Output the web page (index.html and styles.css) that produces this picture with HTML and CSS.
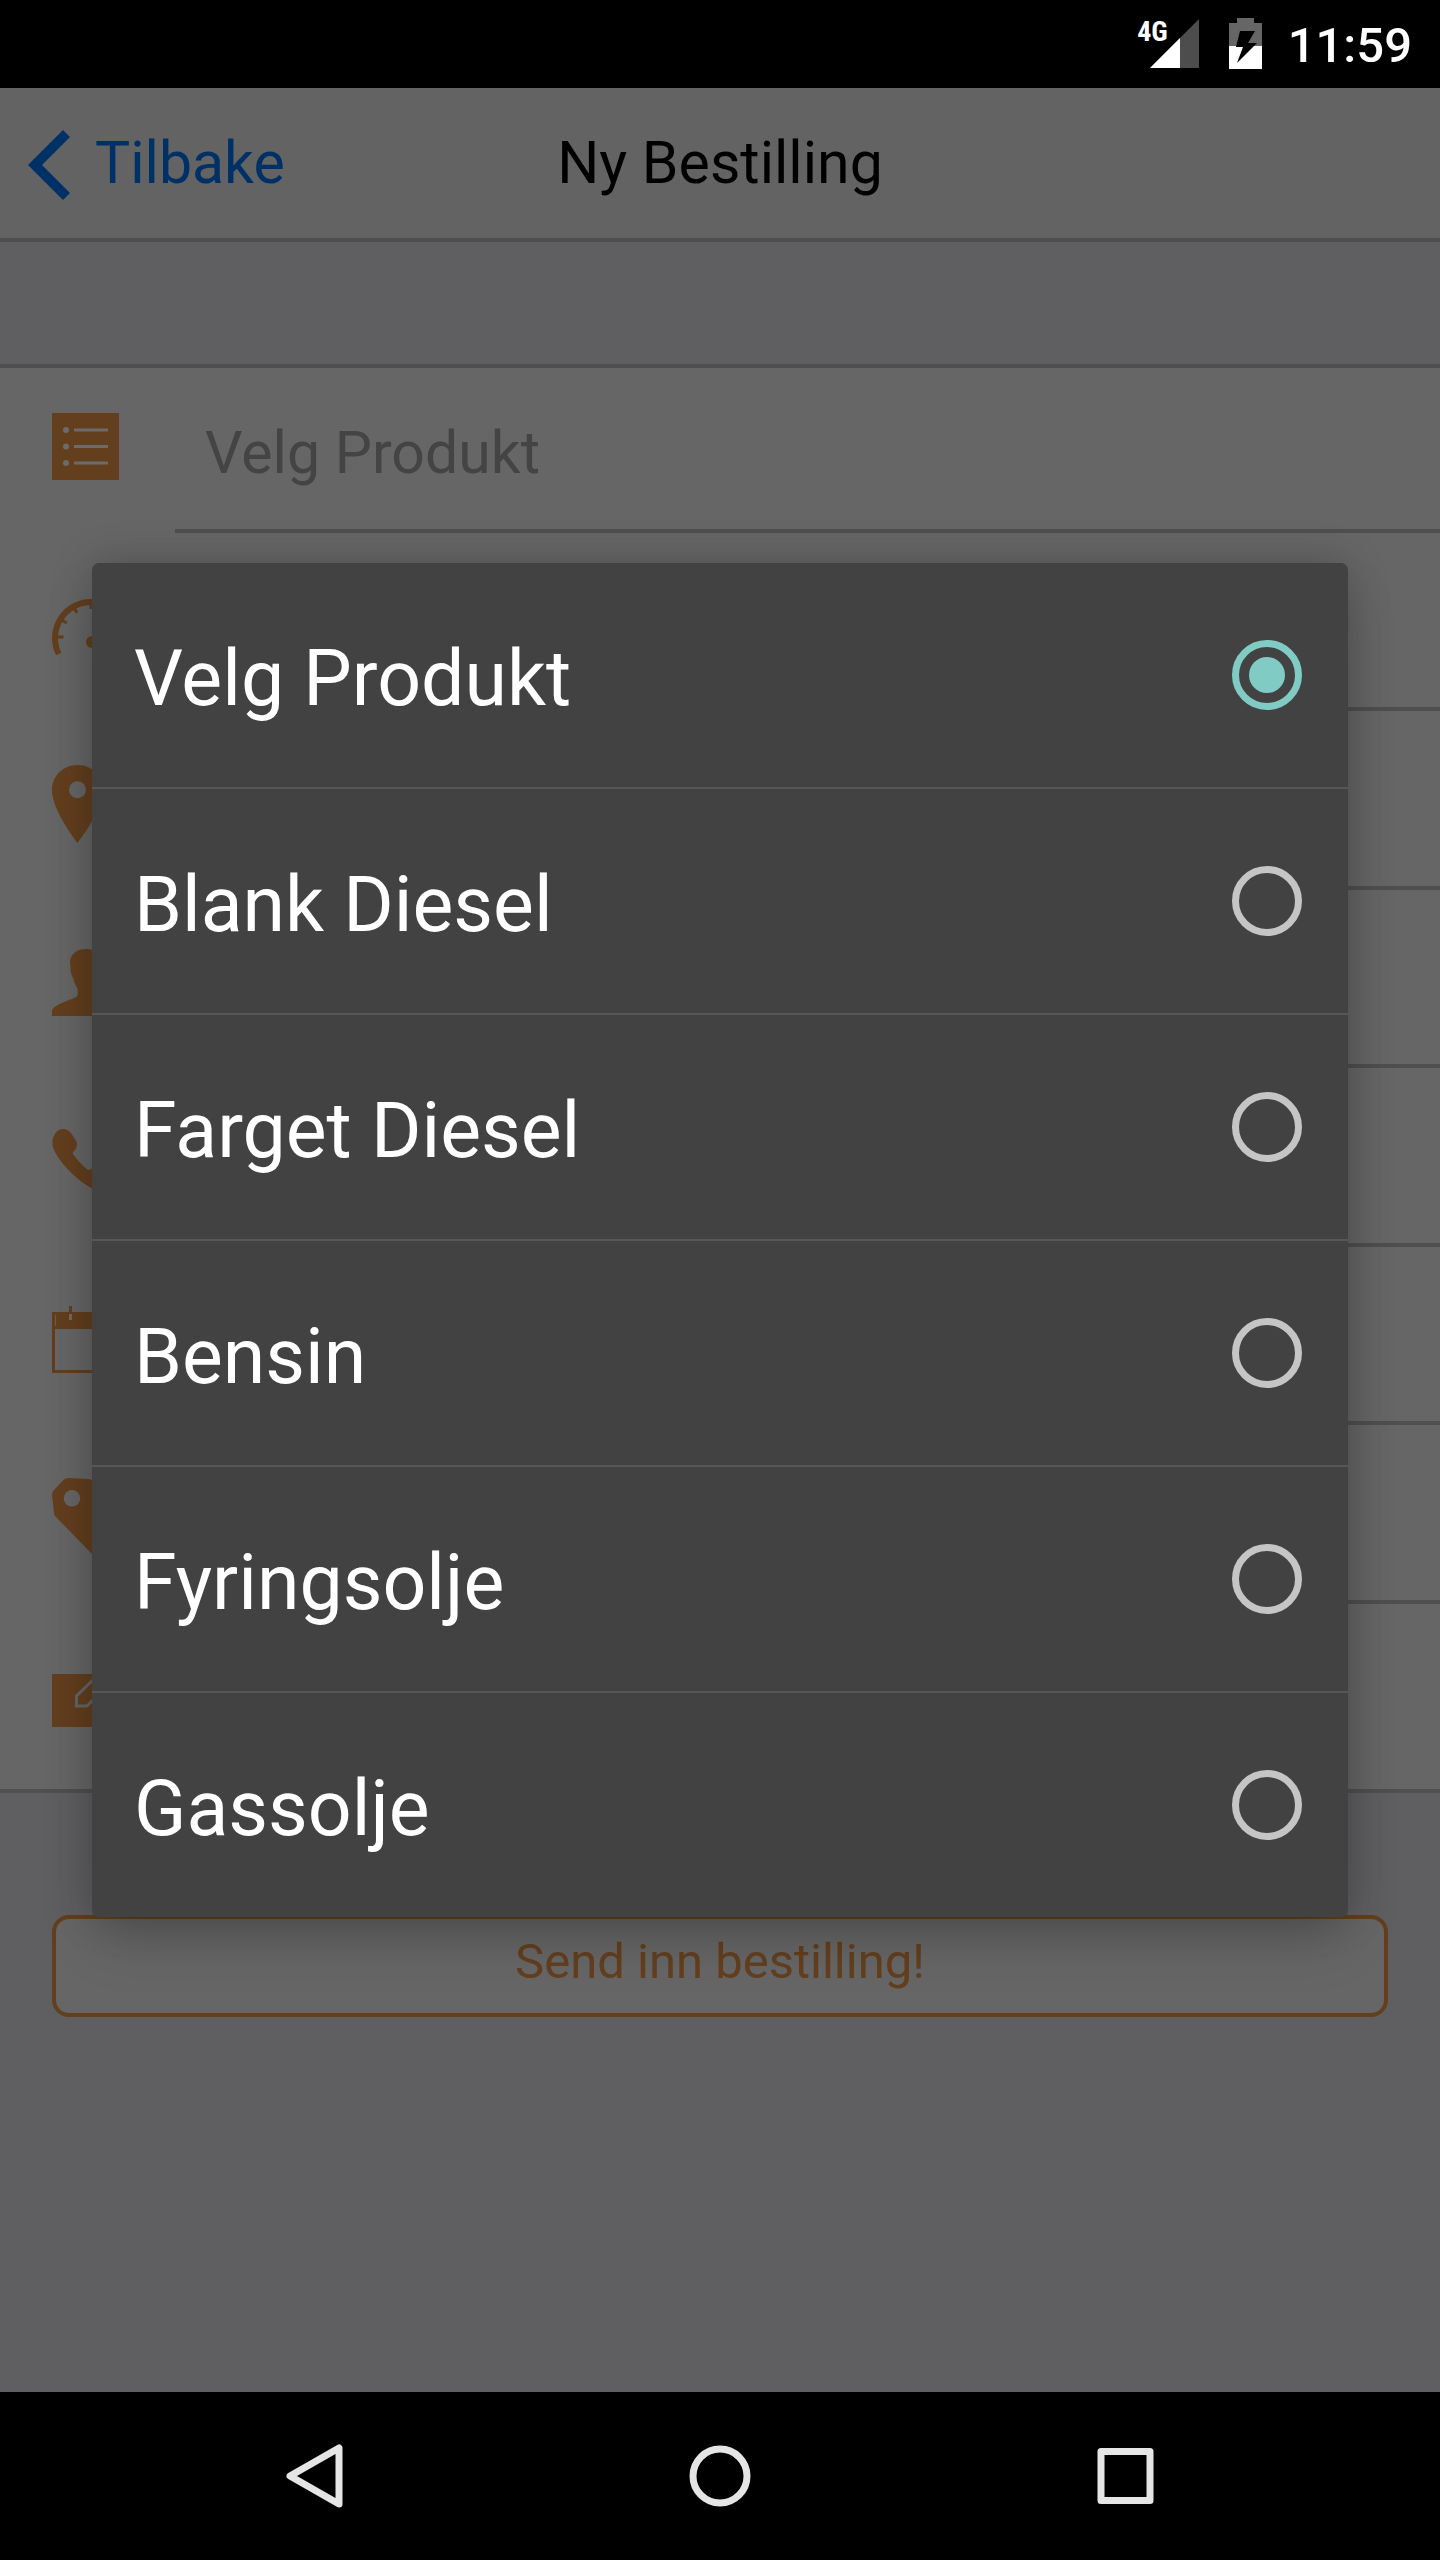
FILE: index.html
```html
<!DOCTYPE html>
<html lang="no">
<head>
<meta charset="utf-8">
<meta name="viewport" content="width=device-width, initial-scale=1">
<title>Ny Bestilling</title>
<link rel="stylesheet" href="styles.css">
</head>
<body>
<div class="status-bar">
  <div class="network">
    <span class="network-type">4G</span>
    <svg class="signal" viewBox="0 0 49 49" aria-hidden="true"><path d="M49 0V49H0Z" fill="#4d4d4d"/><path d="M30 19V49H0Z" fill="#fff"/></svg>
  </div>
  <svg class="battery" viewBox="0 0 33 51" aria-hidden="true"><path d="M8 0H25V5H33V28H0V5H8Z" fill="#666"/><path d="M0 28H33V51H0Z" fill="#fff"/><path d="M11 13H26L19 25H28L8 45L14 29H7Z" fill="#000"/></svg>
  <time class="clock">11:59</time>
</div>

<div class="app">
  <header class="navbar">
    <a class="back" href="#"><svg class="chevron" viewBox="0 0 42 70" aria-hidden="true"><path d="M0 35L35 0L42 7L14 35L42 63L35 70Z"/></svg>Tilbake</a>
    <h1 class="title">Ny Bestilling</h1>
  </header>

  <form class="order">
    <div class="fields">
      <div class="row row-first">
        <svg class="icon" viewBox="0 0 80 80" aria-hidden="true"><path d="M0 6H67V73H0Z"/><g class="cut"><circle cx="14" cy="23" r="3"/><circle cx="14" cy="39.500" r="3"/><circle cx="14" cy="56" r="3"/><path d="M22 21.500H56V24.500H22ZM22 38H56V41H22ZM22 54.500H56V57.500H22Z"/></g></svg>
        <div class="field"><select class="control" aria-label="Produkt"><option>Velg Produkt</option><option>Blank Diesel</option><option>Farget Diesel</option><option>Bensin</option><option>Fyringsolje</option><option>Gassolje</option></select></div>
      </div>
      <div class="row">
        <svg class="icon" viewBox="0 0 80 80" aria-hidden="true"><path class="line" stroke-width="6" d="M6.700 68A36 36 0 1 1 71.300 68"/><path class="line" stroke-width="3" d="M4 51H11.500M9 33.700L14.800 37M21.500 20.800L25 26.800M39 15V23M56.500 20.800L53 26.800M69 33.700L63.200 37M74 51H66.500M40 56L56 36"/><circle cx="40" cy="56" r="6"/></svg>
        <div class="field"><input class="control" type="number" aria-label="Mengde"></div>
      </div>
      <div class="row">
        <svg class="icon" viewBox="0 0 80 80" aria-hidden="true"><path fill-rule="evenodd" d="M25.500 79C18 69 0 44 0 26C0 12 11 1 25.500 1S51 12 51 26C51 44 33 69 25.500 79ZM25.500 17.200A8.500 8.500 0 1 0 25.500 34.200A8.500 8.500 0 1 0 25.500 17.200Z"/></svg>
        <div class="field"><input class="control" type="text" aria-label="Adresse"></div>
      </div>
      <div class="row">
        <svg class="icon" viewBox="0 0 80 80" aria-hidden="true"><path d="M34 6C24 6 18 12 18 19C18 22 19 24 18.500 26C18.500 30 20 33 21 35C22 39 24 43 25.700 46V52C25.700 54 22 55 17 57C9 60 0 64 0 68V73H68V68C68 64 59 60 51 57C46 55 42.300 54 42.300 52V46C44 43 46 39 47 35C48 33 49.500 30 49.500 26C49 24 50 22 50 19C50 12 44 6 34 6Z"/></svg>
        <div class="field"><input class="control" type="text" aria-label="Navn"></div>
      </div>
      <div class="row">
        <svg class="icon" viewBox="0 0 80 80" aria-hidden="true"><path d="M11 8C15 8 17 10 19 12L23.500 19C26 23 25 26 23 29C21 31 20 32 21 33C25 39 31 45 36 49C38 49 39 48 42 46C45 44 48 45 50 47L62 55C67 58 67 62 64 66C60 72 55 75 49 72C27 63 8 42 2 29C0 25 0 20 1 17C3 11 7 8 11 8Z"/></svg>
        <div class="field"><input class="control" type="tel" aria-label="Telefon"></div>
      </div>
      <div class="row">
        <svg class="icon" viewBox="0 0 80 80" aria-hidden="true"><path class="line" stroke-width="3" d="M1.500 13.500H66.500V71.500H1.500Z"/><path d="M3.800 15H64.200V26H3.800ZM0 26H68V29H0ZM17 6H20V14H17ZM48 6H51V14H48Z"/><path class="cut" d="M17 14H20V20H17ZM48 14H51V20H48Z"/></svg>
        <div class="field"><input class="control" type="text" aria-label="Dato"></div>
      </div>
      <div class="row">
        <svg class="icon" viewBox="0 0 80 80" aria-hidden="true"><path fill-rule="evenodd" d="M12 1.500Q14 0 16 0L36 1Q39 1 41 3L76 39Q79 42 76 45L46 76Q43 79 40 76L3 38Q2 37 2 35L0 17Q0 14 2 12ZM20 12A8.300 8.300 0 1 0 20 28.600A8.300 8.300 0 1 0 20 12Z"/></svg>
        <div class="field"><input class="control" type="text" aria-label="Referanse"></div>
      </div>
      <div class="row">
        <svg class="icon" viewBox="0 0 80 80" aria-hidden="true"><path d="M0 17H68V70H0Z"/><path class="pencil" d="M24.500 49V39L42 22L52 32L35 49Z"/></svg>
        <div class="field"><input class="control" type="text" aria-label="Melding"></div>
      </div>
    </div>
    <button class="submit" type="button">Send inn bestilling!</button>
  </form>

  <div class="overlay">
    <div class="dialog" role="dialog" aria-label="Velg Produkt">
      <label class="option"><span class="option-text">Velg Produkt</span><input class="radio" type="radio" name="product" checked></label>
      <label class="option"><span class="option-text">Blank Diesel</span><input class="radio" type="radio" name="product"></label>
      <label class="option"><span class="option-text">Farget Diesel</span><input class="radio" type="radio" name="product"></label>
      <label class="option"><span class="option-text">Bensin</span><input class="radio" type="radio" name="product"></label>
      <label class="option"><span class="option-text">Fyringsolje</span><input class="radio" type="radio" name="product"></label>
      <label class="option"><span class="option-text">Gassolje</span><input class="radio" type="radio" name="product"></label>
    </div>
  </div>
</div>

<nav class="system-nav">
  <button class="nav-button" type="button" aria-label="Tilbake"><svg class="nav-icon" viewBox="0 0 66 66"><path d="M57 5V61L8 33Z"/></svg></button>
  <button class="nav-button" type="button" aria-label="Hjem"><svg class="nav-icon" viewBox="0 0 66 66"><circle cx="33" cy="33" r="27"/></svg></button>
  <button class="nav-button" type="button" aria-label="Oversikt"><svg class="nav-icon" viewBox="0 0 66 66"><path d="M9 8.500H58V57.500H9Z"/></svg></button>
</nav>
</body>
</html>
```
FILE: styles.css
```css
* {
  box-sizing: border-box;
}

body {
  margin: 0;
  min-height: 100vh;
  display: flex;
  flex-direction: column;
  background: #000;
  font-family: Roboto, "Liberation Sans", sans-serif;
}

button,
input,
select {
  margin: 0;
  font: inherit;
}

/* Status bar */
.status-bar {
  display: flex;
  justify-content: flex-end;
  height: 88px;
  padding: 18px 28px 0 0;
  color: #fff;
}

.network {
  display: flex;
  position: relative;
  padding: 1px 30px 0 0;
}

.network-type {
  position: absolute;
  right: 61px;
  top: 0;
  font-family: "Roboto Condensed", Roboto, sans-serif;
  font-size: 28px;
  font-weight: 700;
  line-height: 28px;
}

.signal {
  width: 49px;
  height: 49px;
}

.battery {
  width: 33px;
  height: 51px;
  margin-right: 26px;
}

.clock {
  font-size: 49px;
  font-weight: 500;
  line-height: 56px;
}

/* App screen, dimmed behind the dialog */
.app {
  position: relative;
  flex: 1;
  background: #5f5f61;
}

.navbar {
  display: grid;
  grid-template-columns: 1fr auto 1fr;
  align-items: center;
  height: 154px;
  padding: 0 28px 2px;
  border-bottom: 4px solid #4e4e4e;
  background: #636363;
  font-size: 59px;
}

.back {
  display: flex;
  align-items: center;
  gap: 25px;
  color: #003166;
  text-decoration: none;
}

.chevron {
  width: 42px;
  height: 70px;
  margin-top: 6px;
  fill: #003166;
}

.title {
  margin: 0;
  color: #000;
  font-size: 59px;
  font-weight: 400;
}

.fields {
  margin-top: 122px;
  border-top: 4px solid #4f4f51;
  border-bottom: 4px solid #4f4f51;
  background: #666;
}

.row {
  display: flex;
  gap: 43px;
  height: 178px;
  padding-left: 52px;
}

.row:nth-child(odd) {
  height: 179px;
}

.row.row-first {
  height: 165px;
}

.row:last-child {
  height: 185px;
}

.icon {
  flex: none;
  width: 80px;
  height: 80px;
  margin-top: 53px;
  fill: #633f1e;
}

.row-first .icon {
  margin-top: 39px;
}

.icon .cut {
  fill: #6b6b6b;
}

.icon .line {
  fill: none;
  stroke: #633f1e;
}

.icon .pencil {
  fill: none;
  stroke: #666;
  stroke-width: 3px;
}

.field {
  flex: 1;
  display: flex;
  border-bottom: 4px solid #4f4f4f;
}

.row:last-child .field {
  border-bottom: 0;
}

.control {
  width: 100%;
  padding: 7px 30px 0;
  border: 0;
  outline: 0;
  appearance: none;
  background: transparent;
  color: #444;
  font-size: 59px;
}

.submit {
  display: block;
  width: calc(100% - 104px);
  height: 102px;
  margin: 122px 52px 0;
  padding: 0 0 9px;
  border: 4px solid #633f1e;
  border-radius: 17px;
  background: #666;
  color: #633f1e;
  font-size: 49px;
}

/* Product picker */
.overlay {
  position: absolute;
  inset: 0;
  display: grid;
  align-items: center;
  padding: 0 92px;
}

.dialog {
  border-radius: 7px;
  background: #424242;
  box-shadow: 0 28px 56px -6px rgba(0, 0, 0, 0.17), 0 0 44px rgba(0, 0, 0, 0.2);
}

.option {
  display: flex;
  align-items: center;
  justify-content: space-between;
  height: 226px;
  padding: 0 46px 0 42px;
  border-bottom: 2px solid #565656;
}

.option:last-child {
  height: 224px;
  border-bottom: 0;
}

.option-text {
  padding-top: 8px;
  color: #fff;
  font-size: 77px;
  line-height: 90px;
}

.radio {
  display: grid;
  place-items: center;
  width: 70px;
  height: 70px;
  border: 7px solid #c5c5c5;
  border-radius: 50%;
  appearance: none;
}

.radio:checked {
  border-color: #80cbc4;
}

.radio:checked::before {
  content: "";
  width: 36px;
  height: 36px;
  border-radius: 50%;
  background: #80cbc4;
}

/* System navigation */
.system-nav {
  display: grid;
  grid-template-columns: repeat(3, 1fr);
  height: 168px;
  padding: 0 112px;
}

.nav-button {
  display: grid;
  place-items: center;
  padding: 0;
  border: 0;
  background: none;
}

.nav-icon {
  width: 66px;
  height: 66px;
  fill: none;
  stroke: #e5e5e5;
  stroke-width: 7px;
  stroke-linejoin: round;
}
```
